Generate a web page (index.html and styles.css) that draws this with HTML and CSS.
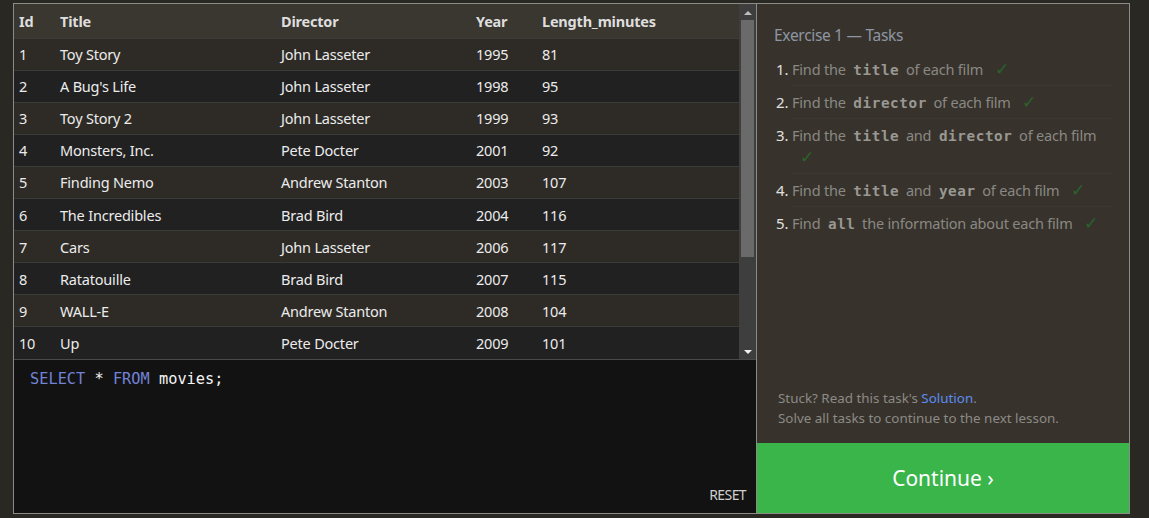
FILE: index.html
```html
<!DOCTYPE html>
<html>
<head>
<meta charset="utf-8">
<link rel="stylesheet" href="styles.css">
</head>
<body>
<div class="frame">
  <div class="left">
    <div class="results">
      <div class="table-wrap">
        <table class="grid">
          <thead>
            <tr><th class="c-id">Id</th><th class="c-title">Title</th><th class="c-dir">Director</th><th class="c-year">Year</th><th>Length_minutes</th></tr>
          </thead>
          <tbody>
            <tr><td>1</td><td>Toy Story</td><td>John Lasseter</td><td>1995</td><td>81</td></tr>
            <tr><td>2</td><td>A Bug's Life</td><td>John Lasseter</td><td>1998</td><td>95</td></tr>
            <tr><td>3</td><td>Toy Story 2</td><td>John Lasseter</td><td>1999</td><td>93</td></tr>
            <tr><td>4</td><td>Monsters, Inc.</td><td>Pete Docter</td><td>2001</td><td>92</td></tr>
            <tr><td>5</td><td>Finding Nemo</td><td>Andrew Stanton</td><td>2003</td><td>107</td></tr>
            <tr><td>6</td><td>The Incredibles</td><td>Brad Bird</td><td>2004</td><td>116</td></tr>
            <tr><td>7</td><td>Cars</td><td>John Lasseter</td><td>2006</td><td>117</td></tr>
            <tr><td>8</td><td>Ratatouille</td><td>Brad Bird</td><td>2007</td><td>115</td></tr>
            <tr><td>9</td><td>WALL-E</td><td>Andrew Stanton</td><td>2008</td><td>104</td></tr>
            <tr><td>10</td><td>Up</td><td>Pete Docter</td><td>2009</td><td>101</td></tr>
          </tbody>
        </table>
      </div>
      <div class="scrollbar">
        <div class="arrow up"></div>
        <div class="track"><div class="thumb"></div></div>
        <div class="arrow down"></div>
      </div>
    </div>
    <div class="editor">
      <div class="code"><span class="kw">SELECT</span> * <span class="kw">FROM</span> movies;</div>
      <div class="reset">RESET</div>
    </div>
  </div>
  <div class="right">
    <div class="tasks">
      <div class="tasks-title">Exercise 1 — Tasks</div>
      <ol class="task-list">
        <li>Find the <code>title</code> of each film <span class="check">✓</span></li>
        <li>Find the <code>director</code> of each film <span class="check">✓</span></li>
        <li>Find the <code>title</code> and <code>director</code> of each film <span class="check">✓</span></li>
        <li>Find the <code>title</code> and <code>year</code> of each film <span class="check">✓</span></li>
        <li>Find <code>all</code> the information about each film <span class="check">✓</span></li>
      </ol>
      <div class="hint">
        <p>Stuck? Read this task's <a class="link">Solution</a>.</p>
        <p>Solve all tasks to continue to the next lesson.</p>
      </div>
    </div>
    <div class="continue">Continue ›</div>
  </div>
</div>
</body>
</html>
```

FILE: styles.css
```css
* { box-sizing: border-box; }
html, body { margin: 0; padding: 0; }
body {
  background: #2a2823;
  font-family: "Noto Sans", "Open Sans", sans-serif;
  color: #e6e6e6;
  width: 1149px;
  height: 518px;
  overflow: hidden;
}
.frame {
  margin: 3px 0 0 13px;
  width: 1117px;
  height: 511px;
  border: 1px solid #8c8c86;
  display: flex;
}
.left {
  width: 743px;
  display: flex;
  flex-direction: column;
  border-right: 1px solid #8c8c86;
}
.results {
  height: 356px;
  display: flex;
  border-bottom: 1px solid #4a4a4a;
  background: #222;
}
.table-wrap {
  flex: 1;
  overflow: hidden;
}
.grid {
  border-collapse: collapse;
  width: 100%;
  font-size: 14.5px;
  letter-spacing: -0.2px;
}
.grid th {
  background: #3a3731;
  font-weight: 700;
  color: #dedede;
  text-align: left;
  height: 34px;
  padding: 0 0 0 5px;
}
.grid td {
  height: 32.1px;
  padding: 0 0 0 5px;
  color: #ececec;
  border-top: 1px solid #3a3a38;
}
.grid tbody tr:nth-child(odd) td { background: #2e2b26; }
.grid tbody tr:nth-child(even) td { background: #212121; }
.c-id { width: 41px; }
.c-title { width: 221px; }
.c-dir { width: 195px; }
.c-year { width: 66px; }
.scrollbar {
  width: 17px;
  background: #3e3e3e;
  display: flex;
  flex-direction: column;
  align-items: center;
}
.arrow {
  width: 0; height: 0;
  border-left: 4px solid transparent;
  border-right: 4px solid transparent;
}
.arrow.up { border-bottom: 4px solid #bdbdbd; margin-top: 7px; margin-bottom: 5px; }
.arrow.down { border-top: 4px solid #f2f2f2; margin-top: 6px; margin-bottom: 5px; }
.track { flex: 1; width: 100%; padding: 0 2px; }
.thumb { width: 100%; height: 237px; background: #6a6a6a; }
.editor {
  flex: 1;
  background: #121212;
  position: relative;
  padding: 8px 16px;
}
.code {
  font-family: "DejaVu Sans Mono", "Liberation Mono", monospace;
  font-size: 15.3px;
  line-height: 22px;
  color: #f4f4f4;
}
.kw { color: #7183d6; }
.reset {
  position: absolute;
  right: 10px;
  bottom: 9px;
  font-size: 14px;
  color: #cfcfcf;
  letter-spacing: -0.6px;
}
.right {
  flex: 1;
  display: flex;
  flex-direction: column;
  background: #37332c;
}
.tasks {
  flex: 1;
  padding: 20px 16px 0 17px;
  display: flex;
  flex-direction: column;
}
.tasks-title {
  font-size: 15.5px;
  color: #8e96a3;
  letter-spacing: -0.3px;
  margin-bottom: 7px;
}
.task-list {
  margin: 0;
  padding: 0 0 0 18px;
  list-style: decimal outside;
}
.task-list li {
  font-size: 14.5px;
  color: #8a8884;
  letter-spacing: -0.2px;
  padding: 5px 4px 5px 0;
  border-bottom: 1px solid #3d3932;
  line-height: 22px;
}
.task-list li::marker { color: #e0e0e0; font-size: 15px; }
.task-list li:last-child { border-bottom: none; }
code {
  font-family: "DejaVu Sans Mono", "Liberation Mono", monospace;
  font-weight: 700;
  font-size: 14.3px;
  line-height: 1;
  color: #9a9893;
  padding: 0 3px 0 4px;
  letter-spacing: 0.6px;
}
.check {
  color: #2a632a;
  margin-left: 8px;
  font-size: 17px;
  font-family: "DejaVu Sans", sans-serif;
  font-weight: 300;
  line-height: 1;
}
.hint {
  margin-top: auto;
  padding: 0 0 15px 4px;
  font-size: 13.4px;
  color: #8c8a86;
}
.hint p { margin: 0; line-height: 20px; }
.link { color: #5b8cf0; }
.continue {
  height: 70px;
  background: #39b54a;
  color: #fff;
  font-size: 21px;
  display: flex;
  align-items: center;
  justify-content: center;
}
```
